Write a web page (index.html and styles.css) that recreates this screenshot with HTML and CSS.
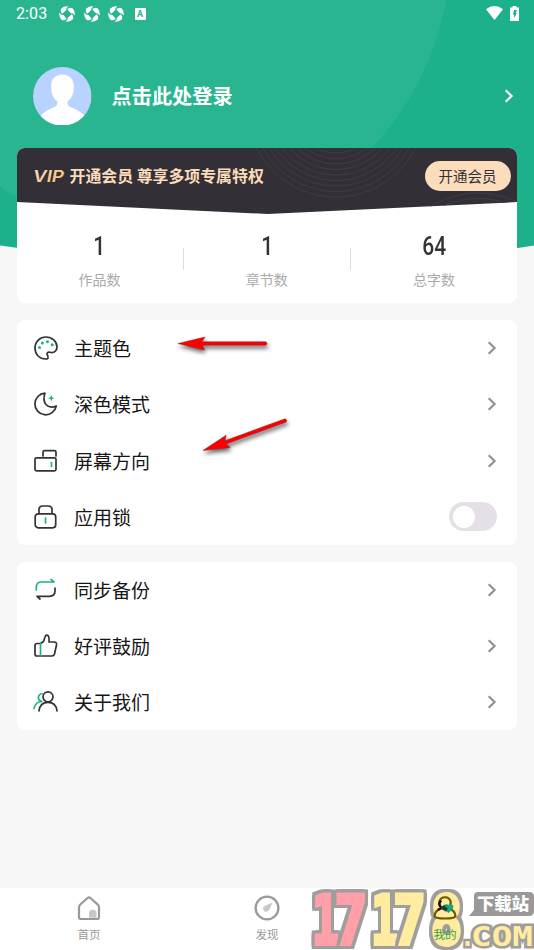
FILE: index.html
```html
<!DOCTYPE html>
<html lang="zh-CN">
<head>
<meta charset="utf-8">
<meta name="viewport" content="width=device-width">
<title>我的</title>
<link rel="stylesheet" href="styles.css">
</head>
<body>
<svg width="0" height="0" class="defs">
  <defs>
    <symbol id="chev" viewBox="0 0 10 16"><path d="M1.7 2.2 7.6 8l-5.9 5.8" fill="none" stroke="currentColor" stroke-width="2.2"/></symbol>
    <symbol id="swirl" viewBox="0 0 16 16">
      <g fill="#fff">
        <path id="blade" d="M2.300 2.500Q5-.2 9.500 .2Q7 1.500 7 4.300L3.300 7.800Q.8 5.500 2.300 2.500Z"/>
        <use href="#blade" transform="rotate(90 8 8)"/>
        <use href="#blade" transform="rotate(180 8 8)"/>
        <use href="#blade" transform="rotate(270 8 8)"/>
      </g>
    </symbol>
  </defs>
</svg>
<div class="screen">
  <svg class="backdrop" viewBox="0 0 534 260">
    <clipPath id="hc"><path d="M0 0H534V245.500Q267 285 0 245.500Z"/></clipPath>
    <g clip-path="url(#hc)"><rect width="534" height="260" fill="#1db18b"/><circle cx="163" cy="-50" r="287.500" fill="#2ab591"/></g>
  </svg>

  <header class="status">
    <span class="time">2:03</span>
    <svg class="sw"><use href="#swirl"/></svg><svg class="sw"><use href="#swirl"/></svg><svg class="sw"><use href="#swirl"/></svg>
    <span class="abox">A</span>
    <svg class="wifi" viewBox="0 0 17 14"><path d="M0 3.200Q8.500-3 17 3.200L8.500 14Z" fill="#fff"/></svg>
    <svg class="batt" viewBox="0 0 9 15"><path d="M2.500 0h4v1.500H9V15H0V1.500h2.500z" fill="#fff"/><path d="M4 4h3L5.700 7H7L4 12V8.500H3z" fill="#1db18b"/></svg>
  </header>

  <section class="profile">
    <svg class="avatar" viewBox="0 0 58 58">
      <clipPath id="av"><circle cx="29" cy="29" r="29"/></clipPath>
      <g clip-path="url(#av)"><rect width="58" height="58" fill="#b8d3ff"/>
      <path d="M29 7.500C21.500 7.500 17.500 13 18 20.500C18.200 27 20.500 31 24 34Q25 38 21 40Q12 43 7 49V60H52V49Q46 43 37.500 40Q33.500 38 34.500 34C38 31 40.300 27 40.500 20.500C41 13 36.500 7.500 29 7.500Z" fill="#fff"/></g>
    </svg>
    <h1>点击此处登录</h1>
    <svg class="chev"><use href="#chev"/></svg>
  </section>

  <section class="member">
    <div class="vip">
      <svg class="vip-bg" viewBox="0 0 501 67">
        <clipPath id="vc"><path d="M0 0H501V54L250.500 66 0 54Z"/></clipPath>
        <g clip-path="url(#vc)"><rect width="501" height="67" fill="#332f37"/>
        <g fill="none" stroke="#403c44">
          <circle cx="319" cy="-40" r="89"/><circle cx="319" cy="-40" r="83.500"/><circle cx="319" cy="-40" r="78"/><circle cx="319" cy="-40" r="72.500"/><circle cx="319" cy="-40" r="67"/><circle cx="319" cy="-40" r="61.500"/><circle cx="319" cy="-40" r="56"/><circle cx="319" cy="-40" r="50.500"/><circle cx="319" cy="-40" r="45"/>
          <circle cx="461" cy="135" r="90"/><circle cx="461" cy="135" r="84.500"/>
        </g></g>
      </svg>
      <svg class="vip-logo" viewBox="0 0 32 16"><defs><linearGradient id="vg" x2="1" y2="1"><stop stop-color="#ffe3bb"/><stop offset="1" stop-color="#f5b774"/></linearGradient></defs><text x="0" y="13.500" textLength="31" lengthAdjust="spacingAndGlyphs" fill="url(#vg)">VIP</text></svg>
      <strong>开通会员 尊享多项专属特权</strong>
      <button>开通会员</button>
    </div>
    <div class="stats">
      <div><b>1</b><span>作品数</span></div>
      <i></i>
      <div><b>1</b><span>章节数</span></div>
      <i></i>
      <div><b>64</b><span>总字数</span></div>
    </div>
  </section>

  <section class="menu">
    <div class="row">
      <svg class="ico" viewBox="0 0 24 24"><path d="M12 23C5 23 1 18 1 12C1 5.500 6 1 12 1S23 5.500 23 11C23 15 20 17 17 16.500Q13 15.500 13 18Q14.500 21 14 22.300Q13 23 12 23Z"/><g class="dot"><circle cx="5.500" cy="11.500" r="1.500"/><circle cx="8.300" cy="6.900" r="1.500"/><circle cx="13.500" cy="5.700" r="1.500"/><circle cx="18.200" cy="8.800" r="1.500"/></g></svg>
      <span>主题色</span><svg class="chev"><use href="#chev"/></svg>
    </div>
    <div class="row">
      <svg class="ico" viewBox="0 0 24 24"><path d="M11 1.200A10.800 10.800 0 1 0 22.300 14Q16 17 12 12.500Q8.500 8 11 1.200Z"/><path class="dot" d="m17.300 3 .9 2.300 2.300.9-2.300.9-.9 2.300-.9-2.300-2.300-.9 2.300-.9z"/></svg>
      <span>深色模式</span><svg class="chev"><use href="#chev"/></svg>
    </div>
    <div class="row">
      <svg class="ico" viewBox="0 0 24 24"><rect x="1" y="8.800" width="21" height="13" rx="1.500"/><path d="M9 7V3.200Q9 1.700 10.500 1.700H20.500Q22 1.700 22 3.200V7"/><path class="g" d="M17.500 13.500v4"/></svg>
      <span>屏幕方向</span><svg class="chev"><use href="#chev"/></svg>
    </div>
    <div class="row">
      <svg class="ico" viewBox="0 0 24 24"><rect x="1.200" y="8.800" width="20.500" height="14" rx="3"/><path d="M5 8.500V4Q5.500 1 8.500 1H14.500Q17.500 1 18 4V8.500"/><path class="g" d="M11.500 13v5"/></svg>
      <span>应用锁</span><div class="switch"></div>
    </div>
  </section>

  <section class="menu second">
    <div class="row">
      <svg class="ico" viewBox="0 0 24 24"><path class="g" d="M2.300 12V9Q2.500 4 7.500 4H20L17 1.300"/><path d="M21 10V13Q21 18 15.500 18.300H3L6 21"/></svg>
      <span>同步备份</span><svg class="chev"><use href="#chev"/></svg>
    </div>
    <div class="row">
      <svg class="ico" viewBox="0 0 24 24"><path d="M6.500 9.500 9.500 7.500 11 3Q11.500 1 13.500 1.200Q15.500 2 15 8H20Q23 8 22.500 11L20.500 20Q20 22 18 22H3Q1 22 1 20V11.500Q1 9.500 3 9.500H6.500"/><path class="g" d="M6.500 9.500V22"/></svg>
      <span>好评鼓励</span><svg class="chev"><use href="#chev"/></svg>
    </div>
    <div class="row">
      <svg class="ico" viewBox="0 0 24 24"><circle cx="14" cy="6.800" r="5"/><path d="M5 20.800Q6 12.300 14 12.300T23 20.800"/><path class="g" d="M8 3.500Q4.500 4.200 4.300 8Q5 11 8 11.500Q1.500 11.500 0 18.500"/></svg>
      <span>关于我们</span><svg class="chev"><use href="#chev"/></svg>
    </div>
  </section>

  <nav>
    <div><svg viewBox="0 0 26 26"><path d="M4.500 9.300 11.300 3.200Q13 1.700 14.700 3.200L21.500 9.300Q23 10.500 23 12V22Q23 24 21 24H5Q3 24 3 22V12Q3 10.500 4.500 9.300Z" fill="none" stroke="#999" stroke-width="2.200"/><path d="M13 22.800V18.500a3.700 3.700 0 0 1 7.500 0v4.300z" fill="#c8c8c8"/></svg><span>首页</span></div>
    <div><svg viewBox="0 0 26 26"><circle cx="13" cy="13" r="11.400" fill="none" stroke="#999" stroke-width="2.300"/><path d="M18.500 7.500 15.500 14.500Q13.500 17.500 10.500 16.500Q7.500 13 10.500 11Z" fill="#c8c8c8"/></svg><span>发现</span></div>
    <div class="active"><svg viewBox="0 0 26 26"><path d="M9.500 13Q6.800 10 7.300 7A5.800 5.800 0 0 1 18.700 7Q19 10.500 16.500 13Q23 15.500 23.500 21Q23 23.500 13 23.500T2.500 21Q3 15.500 9.500 13Z" fill="none" stroke="#6d5800" stroke-width="2.200"/><path d="M9.500 13Q7 10.500 7.300 8.500L9 5.500M9.500 13 6 15" fill="none" stroke="#111" stroke-width="2.400"/><path d="M12 10.500Q14 9 16 10Q20 8 21.500 11Q21.500 14 16.500 18Q12 14.500 12 10.500Z" fill="#16a878"/><path d="m8 13 4-3 4 4-2 2-3-1z" fill="#173d30"/></svg><span>我的</span></div>
  </nav>

  <svg class="arrows" viewBox="0 0 130 130">
    <g fill="#fa0000" stroke="#a02020" stroke-width=".5">
      <path d="M7 13.500 34 7 31 11.800H95Q97 13.500 95 15.200H31L33.500 20Z"/>
      <path d="M7 13.500 34 7 31 11.800H95Q97 13.500 95 15.200H31L33.500 20Z" transform="translate(32 120.500) rotate(-20) translate(-7 -13.500)"/>
    </g>
  </svg>

  <svg class="mark" viewBox="0 0 226 64">
    <g class="digits">
      <text x="4" y="56" textLength="27" lengthAdjust="spacingAndGlyphs" class="pink">1</text>
      <text x="26.500" y="56" textLength="33" lengthAdjust="spacingAndGlyphs" class="pink">7</text>
      <text x="63" y="56" textLength="27" lengthAdjust="spacingAndGlyphs">1</text>
      <text x="85" y="56" textLength="33" lengthAdjust="spacingAndGlyphs">7</text>
      <text x="122.500" y="56" textLength="32" lengthAdjust="spacingAndGlyphs">8</text>
    </g>
    <text class="com" x="152" y="58" textLength="15" lengthAdjust="spacingAndGlyphs">.</text>
    <text class="com" x="163" y="58" textLength="62" lengthAdjust="spacingAndGlyphs">COM</text>
    <path d="M170 4H221Q226 4 226 9V23Q226 28 221 28H161L166 22V8Q166 4 170 4Z" fill="#999"/>
    <text class="site" x="169" y="22" textLength="52" lengthAdjust="spacingAndGlyphs">下载站</text>
  </svg>
</div>
</body>
</html>
```
FILE: styles.css
```css
* { box-sizing: border-box; }
body { margin: 0; background: #f7f7f7; font-family: "Noto Sans CJK SC", sans-serif; }
.defs { position: absolute; }
.screen { position: relative; width: 534px; height: 950px; overflow: hidden; display: flex; flex-direction: column; }
.backdrop { position: absolute; left: 0; top: 0; width: 534px; height: 260px; }
.status { position: relative; height: 28px; padding: 0 15.500px 0 16px; display: flex; align-items: center; color: #fff; }
.time { font: 400 16px/28px Roboto, sans-serif; width: 43px; letter-spacing: .1px; }
.sw { width: 16px; height: 16px; margin-right: 8.500px; }
.abox { width: 11px; height: 12px; margin-left: 2px; border-radius: 1px; background: #fff; color: #2ab591; font: bold 9px/12px Roboto, sans-serif; text-align: center; }
.wifi { width: 17px; height: 14px; margin: 0 7px 2px auto; }
.batt { width: 9px; height: 15px; margin-bottom: 2px; }
.profile { position: relative; height: 120px; padding: 32px 20.500px 16px 33px; display: flex; align-items: center; color: #fff; }
.avatar { width: 58.500px; height: 58.500px; }
h1 { margin: 0 auto 0 20px; font-size: 20.200px; line-height: 30px; font-weight: 700; }
.chev { width: 10px; height: 16px; color: #919191; }
.profile .chev { color: #fff; }
.member { position: relative; margin: 0 17px 0 16.500px; height: 155px; border-radius: 8px; background: #fff; overflow: hidden; }
.vip { position: relative; height: 67px; display: flex; align-items: center; padding: 0 6.500px 12px 16px; }
.vip-bg { position: absolute; left: 0; top: 0; width: 501px; height: 67px; }
.vip-logo { position: relative; width: 32px; height: 16px; margin-right: 5px; overflow: visible; }
.vip-logo text { font: italic 600 16.500px Inter, sans-serif; }
.vip strong { position: relative; font-size: 15.900px; line-height: 24px; font-weight: 700; color: #fbdcbb; margin-right: auto; white-space: nowrap; }
.vip button { position: relative; width: 86px; height: 30px; border: 0; border-radius: 15px; padding: 0; background: #fbddbc; color: #332f37; font: 14.500px/30px "Noto Sans CJK SC", sans-serif; }
.stats { display: flex; align-items: center; height: 88px; }
.stats div { flex: 1; display: flex; flex-direction: column; align-items: center; padding-top: 4px; }
.stats b { font: 500 25px/28px Roboto, sans-serif; color: #333; transform: scaleX(.84); }
.stats span { font-size: 14px; line-height: 20px; margin-top: 8px; color: #aaa; }
.stats i { width: 1px; height: 22px; background: #ddd; }
.menu { margin: 17px 17px 0 16.500px; border-radius: 8px; background: #fff; }
.menu.second { margin-top: 16.500px; }
.row { height: 56.250px; display: flex; align-items: center; padding: 0 20px 0 17.500px; font-size: 19px; line-height: 28px; color: #161616; }
.row span { margin-left: 16px; margin-right: auto; }
.ico { width: 24px; height: 24px; fill: none; stroke: #333; stroke-width: 1.700; stroke-linecap: round; stroke-linejoin: round; overflow: visible; }
.ico .g { stroke: #1db18b; }
.ico .dot { fill: #1db18b; stroke: none; }
.switch { width: 48px; height: 29px; border-radius: 15px; background: #e5e0e8; padding: 3.500px 4px; }
.switch::before { content: ""; display: block; width: 22px; height: 22px; border-radius: 50%; background: #fff; }
nav { margin-top: auto; height: 62px; background: #fff; display: flex; }
nav div { flex: 1; display: flex; flex-direction: column; align-items: center; padding-top: 7px; font-size: 11.600px; line-height: 16px; color: #999; }
nav svg { width: 26px; height: 26px; margin-bottom: 5px; }
nav .active { color: #3d9e45; }
nav .active svg, nav .active span { position: relative; z-index: 3; }
.arrows { position: absolute; left: 171px; top: 330px; width: 130px; height: 130px; overflow: visible; filter: drop-shadow(1px 3px 2px rgba(0,0,0,.6)); }
.mark { position: absolute; left: 308px; top: 888px; width: 226px; height: 64px; z-index: 2; }
.mark text { font-family: "DejaVu Sans Mono", monospace; font-weight: bold; paint-order: stroke; stroke: #9f9e9d; stroke-linejoin: miter; fill: #ffeca0; }
.digits text { font-size: 67px; stroke: #ffeca0; stroke-width: 4px; filter: drop-shadow(3px 0 0 #9f9e9d) drop-shadow(-3px 0 0 #9f9e9d) drop-shadow(0 3px 0 #9f9e9d) drop-shadow(0 -3px 0 #9f9e9d); }
.digits .pink { fill: #ffa0a8; stroke: #ffa0a8; }
.mark .com { font-size: 27px; stroke-width: 5px; }
.mark .site { font: 900 17px "Noto Sans CJK SC", sans-serif; fill: #fff; stroke: none; }
```
